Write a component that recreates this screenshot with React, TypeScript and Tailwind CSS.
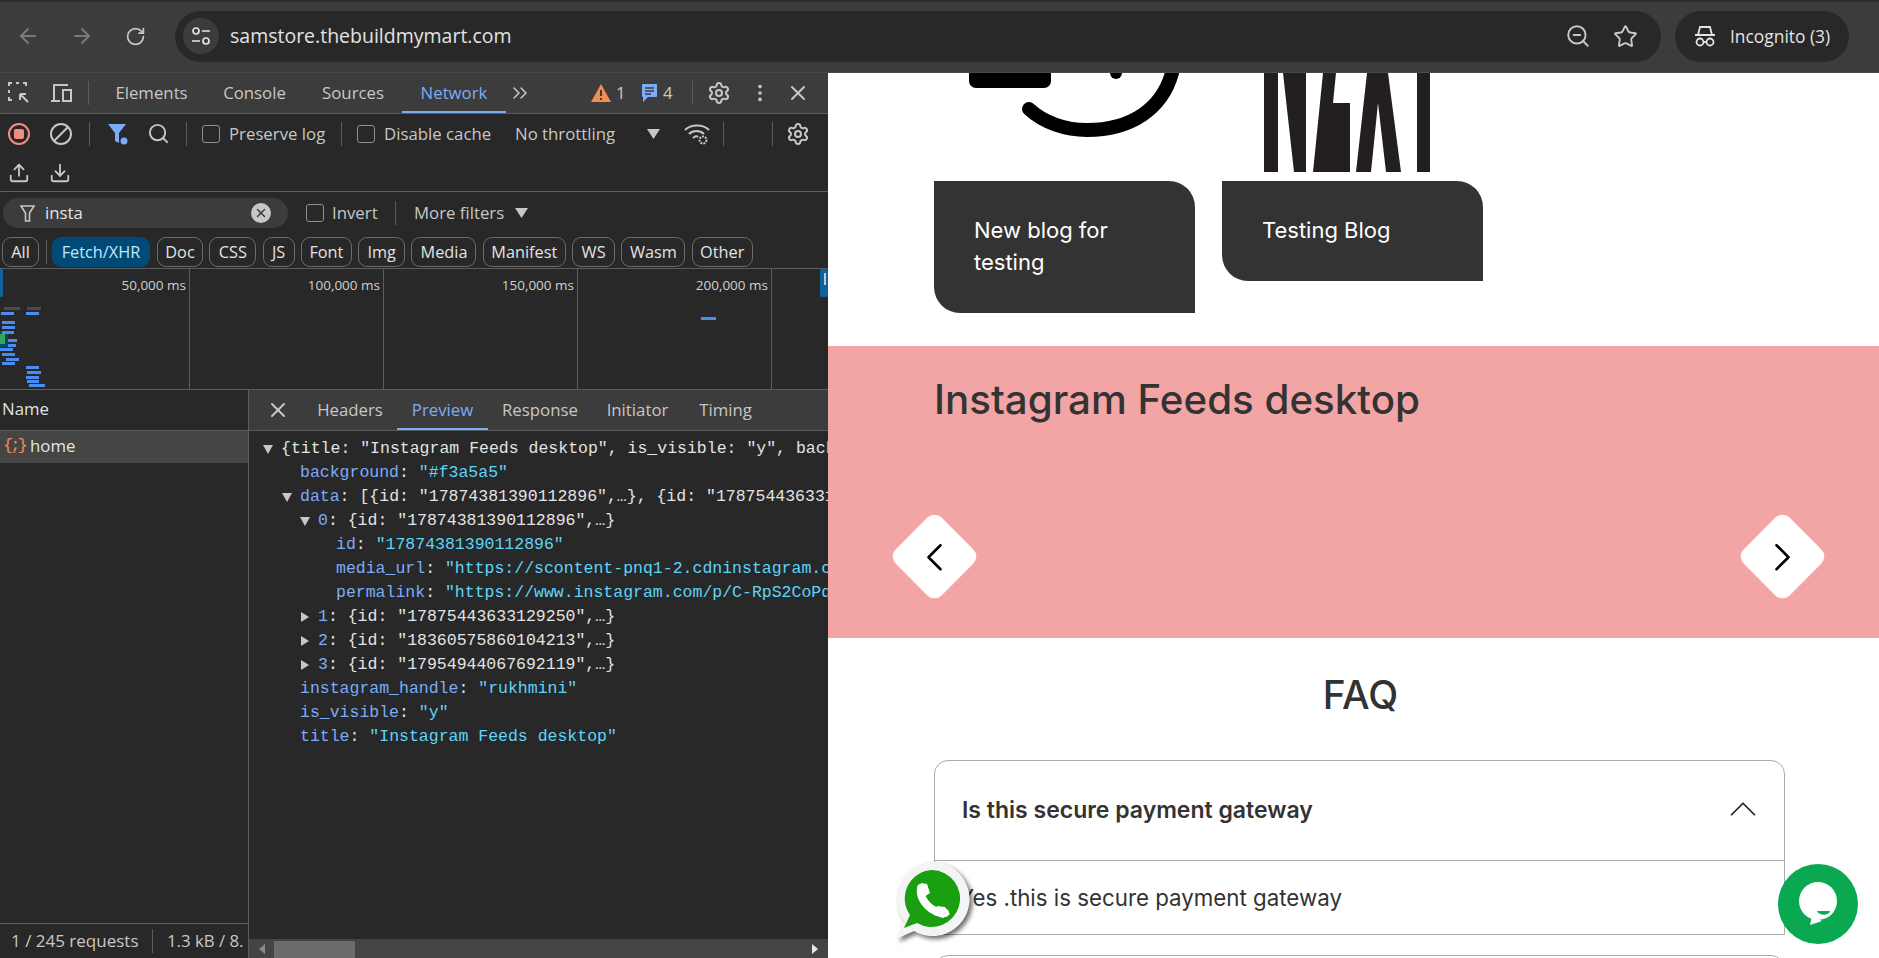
import { ArrowLeft, ArrowRight, ChevronLeft, ChevronRight, ChevronUp, ChevronsRight, Download, EllipsisVertical, RotateCw, Search, Settings, Star, Upload, X, ZoomOut } from 'lucide-react'
import type { ReactNode } from 'react'

const chips = [
  { label: 'Doc', w: 'w-[46px]' },
  { label: 'CSS', w: 'w-[47px]' },
  { label: 'JS', w: 'w-[32px]' },
  { label: 'Font', w: 'w-[51px]' },
  { label: 'Img', w: 'w-[47px]' },
  { label: 'Media', w: 'w-[65px]' },
  { label: 'Manifest', w: 'w-[83px]' },
  { label: 'WS', w: 'w-[43px]' },
  { label: 'Wasm', w: 'w-[64px]' },
  { label: 'Other', w: 'w-[61px]' },
]

const ticks = [
  { label: '50,000 ms', w: 'w-[190px]' },
  { label: '100,000 ms', w: 'w-[194px]' },
  { label: '150,000 ms', w: 'w-[194px]' },
  { label: '200,000 ms', w: 'w-[194px]' },
]

// x, y, width of the blue bars in the network overview
const bars = [
  [1, 312, 13], [26, 312, 13], [2, 321, 13], [2, 326, 13], [2, 331, 12], [8, 339, 9], [8, 344, 8], [0, 348, 13],
  [2, 353, 13], [6, 358, 13], [2, 362, 13], [26, 366, 13], [27, 371, 14], [26, 376, 13], [27, 380, 12], [29, 384, 16], [701, 317, 15],
]

function Divider({ className }: { className: string }) {
  return <div className={`w-px h-[24px] bg-[#5c5c5c] shrink-0 ${className}`} />
}

function Checkbox() {
  return <div className="w-[18px] h-[18px] rounded-[3px] border border-[#8e918f] shrink-0" />
}

function Caret({ open }: { open: boolean }) {
  return (
    <svg width="10" height="12" viewBox="0 0 10 12" className="shrink-0 mr-2">
      {open ? <path d="M0 2h10L5 11z" fill="#c7c7c7" /> : <path d="M1 1l8 5-8 5z" fill="#c7c7c7" />}
    </svg>
  )
}

function Key({ children }: { children: ReactNode }) {
  return <span className="text-[#7cacf8]">{children}</span>
}

function Str({ children }: { children: ReactNode }) {
  return <span className="text-[#5cd5fb]">{children}</span>
}

function Row({ pad, children }: { pad: string; children: ReactNode }) {
  return <div className={`h-[24px] flex items-center whitespace-nowrap ${pad}`}>{children}</div>
}

function Devtools() {
  return (
    <div className="w-[828px] shrink-0 h-full flex flex-col bg-[#282828] text-[#c7c7c7] text-[16.8px] font-['Open_Sans',sans-serif] overflow-hidden">
      {/* tabs */}
      <div className="h-[41px] shrink-0 flex items-center bg-[#3c3c3c] border-b border-[#5c5c5c]">
        <svg width="22" height="22" viewBox="0 0 22 22" fill="none" stroke="#c7c7c7" strokeWidth="2" className="ml-2 shrink-0">
          <path d="M1 4V1h3M8 1h3M15 1h3v3M1 8v3M1 15v3h3M13 13l7 7M12 12h6M12 12v6" />
        </svg>
        <svg width="22" height="22" viewBox="0 0 22 22" fill="none" stroke="#c7c7c7" strokeWidth="2" className="ml-5 shrink-0">
          <path d="M4 18V3h14M1 19h9M13 8h8v11h-8z" />
        </svg>
        <Divider className="ml-4" />
        <div className="ml-[9px] w-[107px] text-center">Elements</div>
        <div className="w-[99px] text-center">Console</div>
        <div className="w-[98px] text-center">Sources</div>
        <div className="w-[104px] h-full flex items-center justify-center text-[#7cacf8] border-b-2 border-[#7cacf8] pt-px">Network</div>
        <ChevronsRight size={24} strokeWidth={1.5} className="ml-[2px] text-[#c7c7c7] shrink-0" />
        <svg width="22" height="20" viewBox="0 0 22 20" className="ml-[58px] shrink-0">
          <path d="M11 1l10 18H1z" fill="#f28b54" />
          <path d="M10 7h2v6h-2zM10 15h2v2h-2z" fill="#3c3c3c" />
        </svg>
        <span className="ml-1 w-[14px]">1</span>
        <svg width="17" height="20" viewBox="0 0 17 20" className="ml-[11px] shrink-0">
          <path d="M2 1h13a1 1 0 011 1v11a1 1 0 01-1 1H7l-5 5v-5a1 1 0 01-1-1V2a1 1 0 011-1z" fill="#7cacf8" />
          <path d="M4 5h9M4 8h9M4 11h6" stroke="#3c3c3c" strokeWidth="1.3" />
        </svg>
        <span className="ml-[5px] w-[14px]">4</span>
        <Divider className="ml-[15px]" />
        <Settings size={24} className="ml-[14px] shrink-0" />
        <EllipsisVertical size={22} className="ml-[18px] shrink-0" />
        <X size={24} className="ml-[15px] shrink-0" />
      </div>

      {/* toolbar */}
      <div className="h-[78px] shrink-0 border-b border-[#5c5c5c]">
        <div className="h-[39px] flex items-center">
          <div className="ml-2 w-[22px] h-[22px] rounded-full border-2 border-[#f28b82] flex items-center justify-center">
            <div className="w-[10px] h-[10px] bg-[#f28b82] rounded-[2px]" />
          </div>
          <svg width="22" height="22" viewBox="0 0 22 22" fill="none" stroke="#c7c7c7" strokeWidth="2" className="ml-5 shrink-0">
            <circle cx="11" cy="11" r="10" />
            <path d="M4 18L18 4" />
          </svg>
          <Divider className="ml-[17px]" />
          <svg width="20" height="22" viewBox="0 0 20 22" className="ml-[18px] shrink-0">
            <path d="M0 1h18l-7 9v10l-4-2v-8z" fill="#7cacf8" />
            <circle cx="16" cy="18" r="3.5" fill="#7cacf8" />
          </svg>
          <Search size={23} className="ml-[19px] shrink-0" />
          <Divider className="ml-[16px]" />
          <div className="ml-[15px]"><Checkbox /></div>
          <span className="ml-[9px] w-[98px] whitespace-nowrap">Preserve log</span>
          <Divider className="ml-[14px]" />
          <div className="ml-[15px]"><Checkbox /></div>
          <span className="ml-[9px] w-[108px] whitespace-nowrap">Disable cache</span>
          <span className="ml-[23px] w-[103px] whitespace-nowrap">No throttling</span>
          <svg width="13" height="10" viewBox="0 0 13 10" className="ml-[29px] shrink-0"><path d="M0 0h13L6.5 10z" fill="#c7c7c7" /></svg>
          <svg width="26" height="24" viewBox="0 0 26 24" fill="none" stroke="#c7c7c7" strokeWidth="2" className="ml-6 shrink-0">
            <path d="M1 8c6-6 18-6 24 0M5 12c4-4 11-4 15 0M9 16c2-2 4-2 5-1" />
            <circle cx="19" cy="18" r="3.5" strokeDasharray="2 1" />
          </svg>
          <Divider className="ml-[13px]" />
          <Divider className="ml-[48px]" />
          <Settings size={24} className="ml-[13px] shrink-0" />
        </div>
        <div className="h-[39px] flex items-center">
          <Upload size={22} className="ml-2" />
          <Download size={22} className="ml-[19px]" />
        </div>
      </div>

      {/* filter */}
      <div className="h-[39px] shrink-0 flex items-center pt-[3px]">
        <div className="ml-[3px] w-[285px] h-[30px] rounded-full bg-[#3c3c3c] flex items-center">
          <svg width="15" height="17" viewBox="0 0 15 17" fill="none" stroke="#c7c7c7" strokeWidth="1.6" className="ml-[17px] shrink-0">
            <path d="M1 1h13L9.5 8v8h-4V8z" />
          </svg>
          <span className="ml-[10px] flex-1 text-[#e3e3e3]">insta</span>
          <div className="w-[20px] h-[20px] mr-[17px] rounded-full bg-[#c7c7c7] flex items-center justify-center">
            <X size={14} strokeWidth={2.5} className="text-[#3c3c3c]" />
          </div>
        </div>
        <div className="ml-[18px]"><Checkbox /></div>
        <span className="ml-[8px] w-[46px]">Invert</span>
        <Divider className="ml-[17px]" />
        <span className="ml-[18px] w-[91px] whitespace-nowrap">More filters</span>
        <svg width="13" height="10" viewBox="0 0 13 10" className="ml-[10px] shrink-0"><path d="M0 0h13L6.5 10z" fill="#c7c7c7" /></svg>
      </div>

      {/* type chips */}
      <div className="h-[38px] shrink-0 flex items-start border-b border-[#5c5c5c] pt-[6px] text-[16.3px] text-[#e3e3e3] font-medium">
        <div className="ml-[2px] w-[37px] h-[30px] rounded-[9px] border border-[#6b6b6b] flex items-center justify-center">All</div>
        <div className="w-px h-[24px] mt-[3px] ml-[7px] bg-[#5c5c5c]" />
        <div className="ml-[5px] mr-[7px] w-[98px] h-[30px] rounded-[9px] bg-[#004a77] flex items-center justify-center text-[#c2e7ff] whitespace-nowrap">Fetch/XHR</div>
        <div className="flex gap-[6.3px]">
          {chips.map(c => (
            <div key={c.label} className={`${c.w} h-[30px] rounded-[9px] border border-[#6b6b6b] flex items-center justify-center`}>{c.label}</div>
          ))}
        </div>
      </div>

      {/* overview */}
      <div className="h-[121px] shrink-0 relative flex border-b border-[#5c5c5c] text-[13.5px] text-[#d0d0d0]">
        {ticks.map(t => (
          <div key={t.label} className={`${t.w} h-full border-r border-[#5c5c5c] text-right pr-[3px] pt-[6px] whitespace-nowrap`}>{t.label}</div>
        ))}
        <svg width="828" height="120" viewBox="0 269 828 120" className="absolute left-0 top-0">
          <rect x="0" y="269" width="3" height="28" rx="1" fill="#0e639c" />
          <rect x="820" y="269" width="8" height="28" rx="2" fill="#0e639c" />
          <rect x="824" y="273" width="2" height="12" fill="#c7c7c7" />
          <rect x="4" y="307" width="16" height="3" fill="#4a4a4a" />
          <rect x="27" y="307" width="14" height="3" fill="#4a4a4a" />
          <rect x="0" y="331" width="8" height="16" fill="#004a77" />
          <rect x="0" y="334" width="5" height="10" fill="#34a853" />
          {bars.map(([x, y, w]) => (
            <rect key={`${x}-${y}`} x={x} y={y} width={w} height="3" fill="#4b8bf0" />
          ))}
        </svg>
      </div>

      {/* requests + preview */}
      <div className="flex-1 min-h-0 flex">
        <div className="w-[249px] shrink-0 flex flex-col border-r border-[#5c5c5c]">
          <div className="h-[41px] shrink-0 flex items-center pl-[2px] pb-[2px] border-b border-[#5c5c5c] text-[#e3e3e3]">Name</div>
          <div className="h-[32px] shrink-0 flex items-center bg-[#454545] text-[#e3e3e3] pb-[2px]">
            <span className="ml-[3px] w-[23px] text-[#f28b54] font-['Liberation_Mono',monospace] text-[17px] tracking-[-3px]">{'{;}'}</span>
            <span className="ml-[4px]">home</span>
          </div>
          <div className="flex-1" />
          <div className="h-[35px] shrink-0 border-t border-[#5c5c5c] flex items-center">
            <span className="ml-[11px] w-[127px] whitespace-nowrap text-[17px]">1 / 245 requests</span>
            <Divider className="ml-[14px]" />
            <span className="ml-[14px] whitespace-nowrap">1.3 kB / 8.</span>
          </div>
        </div>
        <div className="flex-1 min-w-0 flex flex-col">
          <div className="h-[41px] shrink-0 flex items-center bg-[#3c3c3c] border-b border-[#5c5c5c]">
            <X size={24} className="ml-[17px] shrink-0" />
            <div className="ml-[27px] w-[66px] text-center">Headers</div>
            <div className="ml-[14px] w-[91px] h-full flex items-center justify-center text-[#7cacf8] border-b-2 border-[#7cacf8] pt-px">Preview</div>
            <div className="ml-[14px] w-[75px] text-center">Response</div>
            <div className="ml-[29px] w-[63px] text-center">Initiator</div>
            <div className="ml-[29px] w-[55px] text-center">Timing</div>
          </div>
          <div className="flex-1 min-h-0 overflow-hidden pt-[6px] font-['Liberation_Mono',monospace] text-[16.5px] text-[#e3e3e3]">
            <Row pad="pl-[14px]"><Caret open />{'{title: "Instagram Feeds desktop", is_visible: "y", background: "#f3a5a5"}'}</Row>
            <Row pad="pl-[51px]"><Key>background</Key>:&nbsp;<Str>"#f3a5a5"</Str></Row>
            <Row pad="pl-[33px]"><Caret open /><Key>data</Key>:&nbsp;{'[{id: "17874381390112896",…}, {id: "17875443633129250",…},…]'}</Row>
            <Row pad="pl-[51px]"><Caret open /><Key>0</Key>:&nbsp;{'{id: "17874381390112896",…}'}</Row>
            <Row pad="pl-[87px]"><Key>id</Key>:&nbsp;<Str>"17874381390112896"</Str></Row>
            <Row pad="pl-[87px]"><Key>media_url</Key>:&nbsp;<Str>"https://scontent-pnq1-2.cdninstagram.com/v/t51.29350-15"</Str></Row>
            <Row pad="pl-[87px]"><Key>permalink</Key>:&nbsp;<Str>"https://www.instagram.com/p/C-RpS2CoPqE/"</Str></Row>
            <Row pad="pl-[51px]"><Caret open={false} /><Key>1</Key>:&nbsp;{'{id: "17875443633129250",…}'}</Row>
            <Row pad="pl-[51px]"><Caret open={false} /><Key>2</Key>:&nbsp;{'{id: "18360575860104213",…}'}</Row>
            <Row pad="pl-[51px]"><Caret open={false} /><Key>3</Key>:&nbsp;{'{id: "17954944067692119",…}'}</Row>
            <Row pad="pl-[51px]"><Key>instagram_handle</Key>:&nbsp;<Str>"rukhmini"</Str></Row>
            <Row pad="pl-[51px]"><Key>is_visible</Key>:&nbsp;<Str>"y"</Str></Row>
            <Row pad="pl-[51px]"><Key>title</Key>:&nbsp;<Str>"Instagram Feeds desktop"</Str></Row>
          </div>
          <div className="h-[19px] shrink-0 bg-[#444444] flex items-center">
            <svg width="6" height="10" viewBox="0 0 6 10" className="ml-[10px] shrink-0"><path d="M6 0v10L0 5z" fill="#8a8a8a" /></svg>
            <div className="ml-[9px] w-[81px] h-full bg-[#6b6b6b] mt-[3px]" />
            <div className="flex-1" />
            <svg width="6" height="10" viewBox="0 0 6 10" className="mr-[10px] shrink-0"><path d="M0 0v10l6-5z" fill="#e8e8e8" /></svg>
          </div>
        </div>
      </div>
    </div>
  )
}

function WebPage() {
  return (
    <div className="flex-1 min-w-0 h-full relative overflow-hidden bg-white font-['Inter',sans-serif] text-[#333333]">
      <div className="h-[273px] px-[106px] flex gap-[27px]">
        <div className="w-[261px] shrink-0">
          <svg width="261" height="108" viewBox="0 0 261 108" fill="none" className="block">
            <rect x="35" y="-8" width="82" height="23" rx="7" fill="#000" />
            <path d="M95 36C110 50 132 57 153 57C197 57 228 36 238 0" stroke="#000" strokeWidth="14" strokeLinecap="round" />
            <circle cx="182" cy="0" r="6" fill="#000" />
          </svg>
          <div className="bg-[#333333] text-white text-[22px] leading-8 pt-[33px] pb-[35px] px-10 rounded-tr-[26px] rounded-bl-[26px]">New blog for testing</div>
        </div>
        <div className="w-[261px] shrink-0">
          <svg width="261" height="108" viewBox="-1 0 261 108" fill="#231f20" className="block">
            <path d="M41 0h14v99H41zM60 0h23v99H71zM100 0h13l-3 30h17v69H90zM144 0h21l13 99h-15l-8-69-7 69h-15zM194 0h13v99h-13z" />
          </svg>
          <div className="bg-[#333333] text-white text-[22px] leading-8 pt-[33px] pb-[35px] px-10 rounded-tr-[26px] rounded-bl-[26px]">Testing Blog</div>
        </div>
      </div>

      <div className="relative h-[292px] bg-[#f3a5a5] pl-[106px] pt-[29px]">
        <h2 className="text-[40.3px] leading-[50px] font-medium whitespace-nowrap">Instagram Feeds desktop</h2>
        <button className="absolute left-[74px] top-[178px] w-[65px] h-[65px] bg-white rounded-[10px] rotate-45 flex items-center justify-center">
          <ChevronLeft size={48} strokeWidth={1.3} className="-rotate-45 text-black" />
        </button>
        <button className="absolute left-[922px] top-[178px] w-[65px] h-[65px] bg-white rounded-[10px] rotate-45 flex items-center justify-center">
          <ChevronRight size={48} strokeWidth={1.3} className="-rotate-45 text-black" />
        </button>
      </div>

      <h2 className="mt-[32px] text-center text-[39px] leading-[50px] font-medium pl-[14px]">FAQ</h2>
      <div className="mt-[40px] ml-[106px] w-[851px]">
        <div className="border border-[#aaaaaa] rounded-t-[14px]">
          <div className="h-[100px] flex items-center justify-between pl-[27px] pr-[18px] border-b border-[#aaaaaa]">
            <span className="text-[23px] font-semibold whitespace-nowrap">Is this secure payment gateway</span>
            <ChevronUp size={46} strokeWidth={0.9} className="text-[#222222] -mt-1" />
          </div>
          <div className="h-[73px] flex items-center pl-[24px] text-[22.3px]">Yes .this is secure payment gateway</div>
        </div>
        <div className="mt-[20px] h-[60px] border border-[#aaaaaa] rounded-t-[14px]" />
      </div>

      {/* floating whatsapp + chat buttons */}
      <svg width="90" height="90" viewBox="0 0 90 90" className="absolute left-[57px] top-[787px] drop-shadow-[3px_3px_2px_rgba(0,0,0,0.55)]">
        <path d="M47 2a37 37 0 11-18 69L11 79l8-18A37 37 0 0147 2z" fill="#f4f4f4" />
        <path d="M47 10a28.500 28.500 0 11-15 53L19 68l6-13A28.500 28.500 0 0147 10z" fill="#1a9f10" />
        <path d="M36 28c-2 12 10 25 24 25" fill="none" stroke="#fff" strokeWidth="8" strokeLinecap="round" />
        <path d="M32 32l4-9 6 1 3 9-6 4zM52 46l8 1 5 7-7 4-9-3z" fill="#fff" />
      </svg>
      <svg width="80" height="80" viewBox="0 0 80 80" className="absolute left-[950px] top-[791px]">
        <circle cx="40" cy="40" r="40" fill="#0aa951" />
        <circle cx="40" cy="37" r="19" fill="#fff" />
        <path d="M34 52l-2 9 12-4z" fill="#fff" />
        <path d="M39 47h13c-1 5-11 5-13 0z" fill="#0aa951" />
      </svg>
    </div>
  )
}

export default function App() {
  return (
    <div className="w-[1879px] h-[958px] overflow-hidden flex flex-col bg-[#3c3c3c]">
      {/* browser chrome */}
      <div className="relative h-[73px] shrink-0 flex items-center bg-[#3c3c3c] border-b border-[#4a4a4a] text-[#e3e3e3] font-['Open_Sans',sans-serif]">
        <div className="absolute top-0 left-0 w-full h-[2px] bg-[#2e2e2e]" />
        <ArrowLeft size={24} className="ml-4 text-[#7a7a7a] shrink-0" />
        <ArrowRight size={24} className="ml-[30px] text-[#7a7a7a] shrink-0" />
        <RotateCw size={21} className="ml-[31px] text-[#c7c7c7] shrink-0" />
        <div className="ml-[29px] w-[1486px] h-[51px] rounded-full bg-[#282828] flex items-center">
          <div className="ml-2 w-[36px] h-[36px] rounded-full bg-[#3c3c3c] flex items-center justify-center">
            <svg width="20" height="20" viewBox="0 0 20 20" fill="none" stroke="#e3e3e3" strokeWidth="1.700">
              <circle cx="5" cy="5" r="3" />
              <circle cx="15" cy="15" r="3" />
              <path d="M11 5h8M1 15h8" />
            </svg>
          </div>
          <span className="ml-[11px] text-[19.5px]">samstore.thebuildmymart.com</span>
          <div className="flex-1" />
          <ZoomOut size={26} strokeWidth={1.8} className="text-[#c7c7c7]" />
          <Star size={25} strokeWidth={1.8} className="ml-[22px] mr-[23px] text-[#c7c7c7]" />
        </div>
        <div className="ml-[14px] w-[174px] h-[51px] rounded-full bg-[#282828] flex items-center">
          <svg width="24" height="24" viewBox="0 0 24 24" fill="none" stroke="#e3e3e3" strokeWidth="1.800" className="ml-[18px] shrink-0">
            <path d="M2 11h20M5 11l2-8h10l2 8" />
            <circle cx="7" cy="18" r="3.500" />
            <circle cx="17" cy="18" r="3.500" />
            <path d="M10.500 18h3" />
          </svg>
          <span className="ml-[13px] text-[17.4px] whitespace-nowrap">Incognito (3)</span>
        </div>
      </div>
      <div className="flex-1 min-h-0 flex">
        <Devtools />
        <WebPage />
      </div>
    </div>
  )
}
